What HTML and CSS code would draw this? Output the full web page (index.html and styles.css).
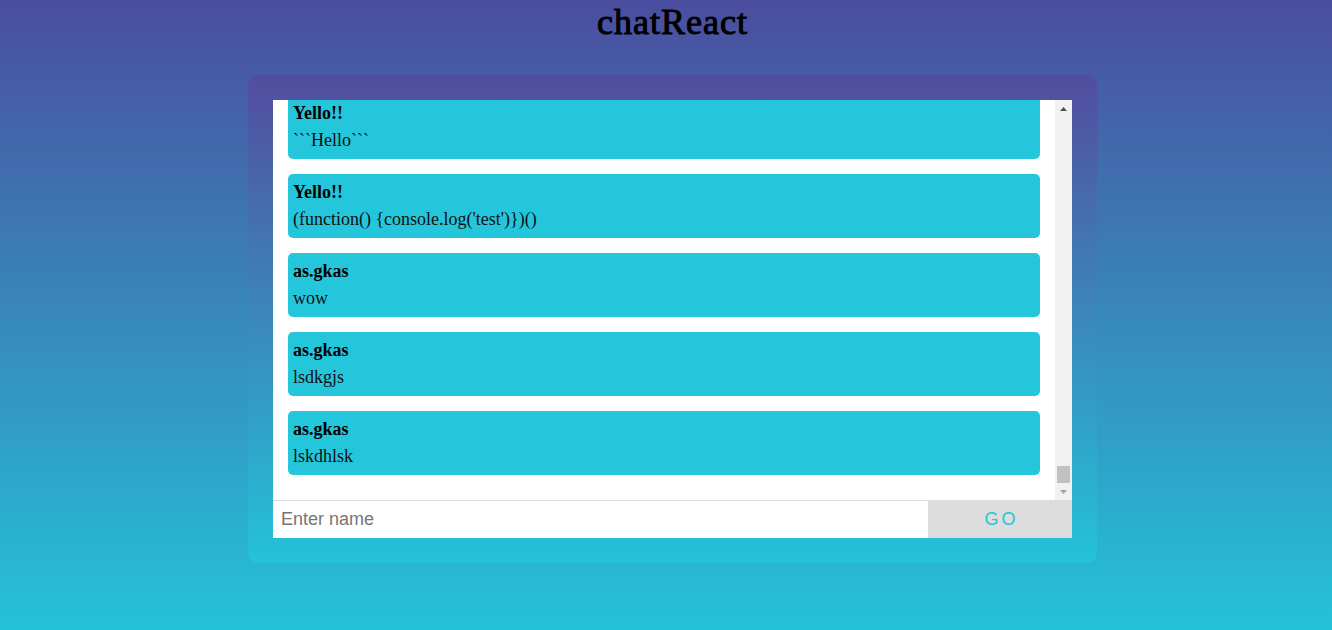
FILE: index.html
```html
<!DOCTYPE html>
<html lang="en">
<head>
<meta charset="utf-8">
<title>chatReact</title>
<link rel="stylesheet" href="styles.css">
</head>
<body>
<div class="page">
  <h1 class="title">chatReact</h1>
  <div class="chat-shell">
    <div class="chat-window">
      <div class="messages-area">
        <div class="messages">
          <div class="message-list">
            <div class="message"><b class="message-name">Yello!!</b><p class="message-text">```Hello```</p></div>
            <div class="message"><b class="message-name">Yello!!</b><p class="message-text">(function() {console.log('test')})()</p></div>
            <div class="message"><b class="message-name">as.gkas</b><p class="message-text">wow</p></div>
            <div class="message"><b class="message-name">as.gkas</b><p class="message-text">lsdkgjs</p></div>
            <div class="message"><b class="message-name">as.gkas</b><p class="message-text">lskdhlsk</p></div>
          </div>
        </div>
        <div class="scrollbar">
          <div class="scroll-btn">
            <svg width="7" height="4" viewBox="0 0 7 4"><path d="M3.5 0L7 4H0z" fill="#505050"/></svg>
          </div>
          <div class="scroll-track"><div class="scroll-thumb"></div></div>
          <div class="scroll-btn">
            <svg width="7" height="4" viewBox="0 0 7 4"><path d="M0 0H7L3.5 4z" fill="#a3a3a3"/></svg>
          </div>
        </div>
      </div>
      <form class="name-form">
        <input class="name-input" type="text" placeholder="Enter name">
        <button class="go-button" type="button">GO</button>
      </form>
    </div>
  </div>
</div>
</body>
</html>
```

FILE: styles.css
```css
html {
  height: 100%;
}

body {
  margin: 0;
  min-height: 100%;
  background: linear-gradient(to bottom, #4b4d9f 0%, #24c3d9 100%);
  font-family: "Liberation Serif", "DejaVu Serif", serif;
  color: #000;
}

.page {
  display: flex;
  flex-direction: column;
  align-items: center;
  padding-left: 13px;
}

.title {
  margin: 0;
  font-size: 36px;
  line-height: 44px;
  font-weight: normal;
  letter-spacing: 1px;
  -webkit-text-stroke: 1px #000;
}

.chat-shell {
  margin-top: 31px;
  width: 799px;
  padding: 25px;
  border-radius: 10px;
  background: linear-gradient(to bottom, #524c9f 0%, #24c3d9 100%);
}

.chat-window {
  background: #fff;
}

.messages-area {
  display: flex;
  height: 400px;
}

.messages {
  flex: 1;
  overflow: hidden;
  display: flex;
  flex-direction: column-reverse;
}

.message-list {
  padding: 0 15px 10px;
}

.message {
  background: #24c6dc;
  border-radius: 5px;
  padding: 5px;
  margin-bottom: 15px;
  font-size: 18px;
  line-height: 27px;
}

.message-name {
  display: block;
  font-weight: bold;
}

.message-text {
  margin: 0;
  color: #111;
}

.scrollbar {
  width: 17px;
  display: flex;
  flex-direction: column;
  background: #f1f1f1;
}

.scroll-btn {
  height: 17px;
  display: flex;
  align-items: center;
  justify-content: center;
}

.scroll-btn svg {
  display: block;
}

.scroll-track {
  flex: 1;
  display: flex;
  flex-direction: column;
  justify-content: flex-end;
  padding: 0 2px;
}

.scroll-thumb {
  height: 17px;
  background: #c1c1c1;
}

.name-form {
  display: flex;
  margin: 0;
  height: 37px;
  border-top: 1px solid #ddd;
}

.name-input {
  flex: 1;
  min-width: 0;
  border: 0;
  padding: 0 8px;
  font: 18px "Liberation Sans", Arial, sans-serif;
  color: #333;
  background: #fff;
  outline: none;
}

.name-input::placeholder {
  color: #757575;
}

.go-button {
  width: 144px;
  border: 0;
  background: #ddd;
  color: #24c6dc;
  font: 18px "Liberation Sans", Arial, sans-serif;
  letter-spacing: 3px;
  padding: 0 0 0 3px;
}
```
